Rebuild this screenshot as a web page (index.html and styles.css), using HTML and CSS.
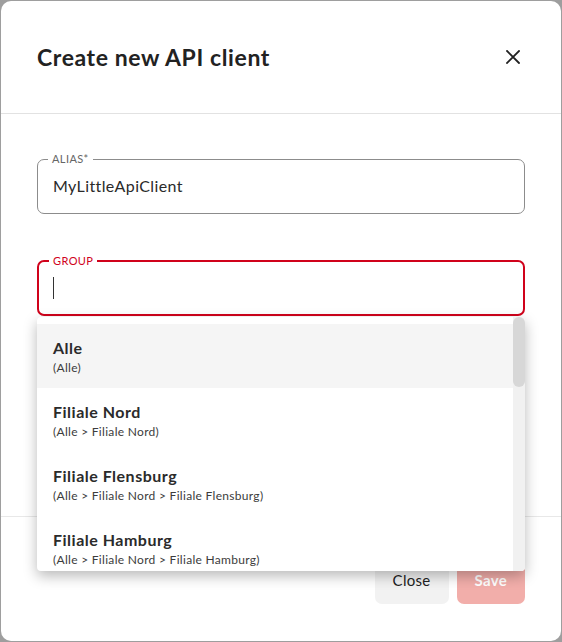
FILE: index.html
```html
<!DOCTYPE html>
<html lang="en">
<head>
<meta charset="utf-8">
<title>Create new API client</title>
<link rel="stylesheet" href="styles.css">
</head>
<body>
<div class="modal">
  <header class="modal-header">
    <h1 class="modal-title">Create new API client</h1>
    <button class="icon-btn" aria-label="Close">
      <svg width="14" height="14" viewBox="0 0 14 14"><path d="M1 1L13 13M13 1L1 13" stroke="#222" stroke-width="1.8" stroke-linecap="square" fill="none"/></svg>
    </button>
  </header>
  <main class="modal-body">
    <fieldset class="field">
      <legend class="field-label">ALIAS*</legend>
      <div class="field-input">MyLittleApiClient</div>
    </fieldset>
    <div class="group-wrap">
      <fieldset class="field field-active">
        <legend class="field-label">GROUP</legend>
        <div class="field-input"><span class="caret"></span></div>
      </fieldset>
      <div class="dropdown">
        <ul class="options">
          <li class="option option-hover">
            <div class="option-title">Alle</div>
            <div class="option-path">(Alle)</div>
          </li>
          <li class="option">
            <div class="option-title">Filiale Nord</div>
            <div class="option-path">(Alle &gt; Filiale Nord)</div>
          </li>
          <li class="option">
            <div class="option-title">Filiale Flensburg</div>
            <div class="option-path">(Alle &gt; Filiale Nord &gt; Filiale Flensburg)</div>
          </li>
          <li class="option">
            <div class="option-title">Filiale Hamburg</div>
            <div class="option-path">(Alle &gt; Filiale Nord &gt; Filiale Hamburg)</div>
          </li>
        </ul>
        <div class="scroll-track"><div class="scroll-thumb"></div></div>
      </div>
    </div>
  </main>
  <footer class="modal-footer">
    <button class="btn btn-secondary">Close</button>
    <button class="btn btn-primary" disabled>Save</button>
  </footer>
</div>
</body>
</html>
```

FILE: styles.css
```css
* { box-sizing: border-box; }
html, body { margin: 0; padding: 0; }
body {
  background: #9e9e9e;
  font-family: Lato, "Noto Sans", "Liberation Sans", sans-serif;
  color: #222;
  width: 562px;
  height: 642px;
  overflow: hidden;
}
.modal {
  margin: 1px 0 0 1px;
  width: 560px;
  height: 640px;
  background: #fff;
  border-radius: 10px;
  display: flex;
  flex-direction: column;
}
.modal-header {
  height: 113px;
  flex: none;
  border-bottom: 1px solid #e2e2e2;
  display: flex;
  align-items: center;
  justify-content: space-between;
  padding: 0 41px 0 36px;
}
.modal-title {
  margin: 0;
  font-size: 23px;
  font-weight: 700;
  color: #222;
  letter-spacing: 0.6px;
}
.icon-btn {
  border: 0;
  background: none;
  padding: 0;
  width: 14px;
  height: 14px;
  display: flex;
}
.modal-body {
  flex: 1;
  padding: 39px 36px 0 36px;
}
.field {
  margin: 0;
  padding: 0 15px 6px 15px;
  border: 1px solid #8c8c8c;
  border-radius: 7px;
  min-width: 0;
}
.field-label {
  font-size: 11px;
  line-height: 12px;
  height: 12px;
  padding: 0 4px;
  margin-left: -5px;
  color: #666;
  letter-spacing: 0.4px;
}
.field-input {
  height: 42px;
  line-height: 42px;
  font-size: 16px;
  letter-spacing: 0.4px;
  color: #2a2a2a;
  display: flex;
  align-items: center;
}
.group-wrap {
  position: relative;
  margin-top: 41px;
}
.field-active {
  border: 2px solid #d0021b;
  padding: 0 14px 5px 14px;
}
.field-active .field-label {
  color: #d0021b;
  margin-left: -4px;
}
.caret {
  display: block;
  width: 1px;
  height: 22px;
  background: #333;
}
.dropdown {
  position: absolute;
  top: calc(100% + 1px);
  left: 0;
  right: 0;
  height: 254px;
  background: #fff;
  border-radius: 4px;
  box-shadow: 0 5px 14px rgba(0, 0, 0, 0.28);
  display: flex;
  overflow: hidden;
  z-index: 10;
}
.options {
  list-style: none;
  margin: 0;
  padding: 7px 0 0 0;
  flex: 1;
  overflow: hidden;
}
.option {
  height: 64px;
  padding: 14px 16px 0 16px;
}
.option-hover { background: #f5f5f5; }
.option-title {
  font-size: 16px;
  line-height: 20px;
  font-weight: 700;
  letter-spacing: 0.5px;
  color: #2b2b2b;
}
.option-path {
  margin-top: 2px;
  font-size: 12px;
  line-height: 16px;
  color: #3c3c3c;
  letter-spacing: 0.3px;
}
.scroll-track {
  width: 12px;
  flex: none;
  background: #f1f1f1;
}
.scroll-thumb {
  height: 70px;
  background: #d7d7d7;
  border-radius: 6px;
}
.modal-footer {
  flex: none;
  border-top: 1px solid #e8e8e8;
  padding: 39px 36px 37px 36px;
  display: flex;
  justify-content: flex-end;
  gap: 8px;
}
.btn {
  height: 48px;
  padding: 0 18px;
  border: 0;
  border-radius: 7px;
  font-family: inherit;
  font-size: 15px;
  letter-spacing: 0.3px;
}
.btn-secondary {
  background: #f2f2f2;
  color: #222;
}
.btn-primary {
  background: #f2aeaa;
  color: #fff;
  font-weight: 700;
}
```
